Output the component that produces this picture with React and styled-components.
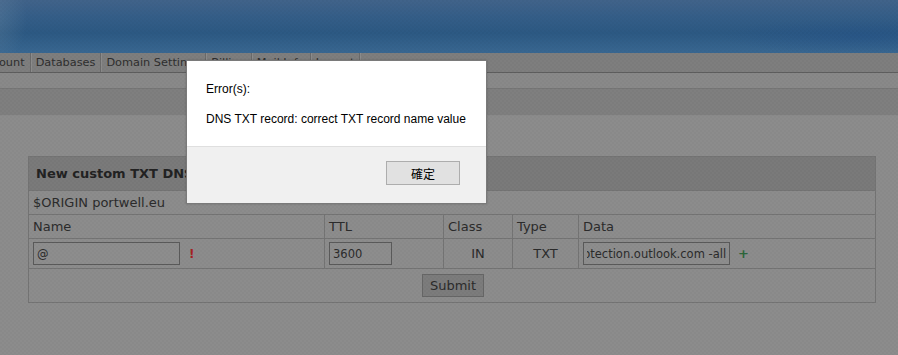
import React, { useEffect, useRef } from 'react';
import styled, { createGlobalStyle } from 'styled-components';

const GlobalStyle = createGlobalStyle`
    html, body{
        margin: 0;
        padding: 0;
        background: #8c8c8c;
        overflow: hidden;
    }
    body{
        font-family: "DejaVu Sans", Verdana, sans-serif;
    }
`;

const tabs = ["Account", "Databases", "Domain Settings", "Billing", "Mail Info", "Logout"];
const columns = [296, 119, 69, 66, 297];

export default function App(){
    const dataRef = useRef(null);

    useEffect(() => {
        if (dataRef.current) dataRef.current.scrollLeft = dataRef.current.scrollWidth;
    }, []);

    return (
        <Page>
            <GlobalStyle />
            <Header />
            <NavBar>
                <TabList>
                    {tabs.map(t => <Tab key={t}>{t}</Tab>)}
                </TabList>
            </NavBar>
            <SubBar />
            <ToolBar />
            <Content>
                <RecordTable>
                    <colgroup>
                        {columns.map((w, i) => <Col key={i} $w={w} />)}
                    </colgroup>
                    <tbody>
                        <tr>
                            <TitleCell colSpan={5}>New custom TXT DNS record</TitleCell>
                        </tr>
                        <tr>
                            <Cell colSpan={5}>$ORIGIN portwell.eu</Cell>
                        </tr>
                        <tr>
                            <Cell>Name</Cell>
                            <Cell>TTL</Cell>
                            <Cell>Class</Cell>
                            <Cell>Type</Cell>
                            <Cell>Data</Cell>
                        </tr>
                        <InputRow>
                            <Cell>
                                <Field $w={147} defaultValue="@" />
                                <Warn>!</Warn>
                            </Cell>
                            <Cell>
                                <Field $w={63} defaultValue="3600" />
                            </Cell>
                            <Cell $center>IN</Cell>
                            <Cell $center>TXT</Cell>
                            <Cell>
                                <Field
                                    ref={dataRef}
                                    $w={147}
                                    defaultValue="v=spf1 include:spf.protection.outlook.com -all"
                                />
                                <Plus>+</Plus>
                            </Cell>
                        </InputRow>
                        <tr>
                            <ButtonCell colSpan={5}>
                                <SubmitButton>Submit</SubmitButton>
                            </ButtonCell>
                        </tr>
                    </tbody>
                </RecordTable>
            </Content>
            <Backdrop />
            <Dialog>
                <DialogBody>
                    <p>Error(s):</p>
                    <p>DNS TXT record: correct TXT record name value</p>
                </DialogBody>
                <DialogFooter>
                    <OkButton>確定</OkButton>
                </DialogFooter>
            </Dialog>
        </Page>
    );
}

const Page = styled.div`
    position: relative;
    width: 898px;
    height: 355px;
    overflow: hidden;
    background: #8c8c8c;
`;

const Header = styled.div`
    height: 53px;
    background:
        radial-gradient(ellipse 50px 70px at -8px 18px, rgba(110,140,165,0.4), rgba(110,140,165,0) 70%),
        radial-gradient(ellipse 200px 26px at 860px 36px, rgba(35,80,135,0.45), rgba(35,80,135,0) 70%),
        linear-gradient(180deg, #41638a 0%, #355e88 30%, #2c5983 62%, #396791 100%);
`;

const NavBar = styled.div`
    height: 19px;
    background: #7e7e7e;
    border-bottom: 1px solid #5e5e5e;
`;

const TabList = styled.div`
    display: flex;
    height: 100%;
    margin-left: -26px;
`;

const Tab = styled.div`
    padding: 0 5px;
    font-size: 11.3px;
    line-height: 19px;
    color: #2e2e2e;
    white-space: nowrap;
    border-right: 1px solid #6a6a6a;
    box-shadow: 1px 0 0 #8c8c8c;
`;

const SubBar = styled.div`
    height: 15px;
    background: #898989;
    border-bottom: 1px solid #767676;
`;

const ToolBar = styled.div`
    height: 26px;
    background: #7f7f7f;
    border-bottom: 1px solid #8a8a8a;
`;

const Content = styled.div`
    padding: 40px 23px 0 28px;
`;

const RecordTable = styled.table`
    width: 847px;
    table-layout: fixed;
    border-collapse: collapse;
    border: 1px solid #747474;
    font-size: 13px;
    color: #2b2b2b;
`;

const Col = styled.col`
    width: ${p => p.$w}px;
`;

const TitleCell = styled.td`
    height: 33px;
    padding: 0 7px;
    background: #7a7a7a;
    font-weight: bold;
    color: #222;
    border-bottom: 1px solid #747474;
`;

const Cell = styled.td`
    height: 23px;
    padding: 0 4px;
    border: 1px solid #747474;
    text-align: ${p => (p.$center ? 'center' : 'left')};
    white-space: nowrap;
    overflow: hidden;
`;

const InputRow = styled.tr`
    td{
        height: 29px;
    }
`;

const Field = styled.input`
    width: ${p => p.$w}px;
    height: 23px;
    box-sizing: border-box;
    padding: 0 3px;
    border: 1px solid #5a5a5a;
    background: #8d8d8d;
    font-family: "DejaVu Sans", Verdana, sans-serif;
    font-size: 11.5px;
    color: #2b2b2b;
    vertical-align: middle;
    outline: none;
`;

const Warn = styled.span`
    display: inline-block;
    margin-left: 9px;
    color: #a52222;
    font-weight: bold;
    font-size: 12px;
    vertical-align: middle;
`;

const Plus = styled.span`
    display: inline-block;
    margin-left: 8px;
    color: #2c663a;
    font-weight: bold;
    font-size: 13px;
    vertical-align: middle;
`;

const ButtonCell = styled.td`
    height: 31px;
    text-align: center;
    border: 1px solid #747474;
`;

const SubmitButton = styled.button`
    width: 62px;
    height: 23px;
    margin-left: 2px;
    background: #7c7c7c;
    border: 1px solid #666;
    font-family: "DejaVu Sans", Verdana, sans-serif;
    font-size: 13px;
    color: #2b2b2b;
    padding: 0;
`;

const Backdrop = styled.div`
    position: absolute;
    inset: 0;
    background-image:
        linear-gradient(45deg, rgba(0,0,0,0.025) 25%, transparent 25%, transparent 75%, rgba(0,0,0,0.025) 75%),
        linear-gradient(45deg, rgba(0,0,0,0.025) 25%, transparent 25%, transparent 75%, rgba(0,0,0,0.025) 75%);
    background-size: 4px 4px;
    background-position: 0 0, 2px 2px;
    pointer-events: none;
`;

const Dialog = styled.div`
    position: absolute;
    left: 186px;
    top: 60px;
    width: 299px;
    border: 1px solid #7a7a7a;
    background: #fff;
    font-family: "Liberation Sans", Arial, sans-serif;
    box-shadow: 0 0 2px rgba(0,0,0,0.2);
`;

const DialogBody = styled.div`
    height: 85px;
    padding: 0 19px;
    border-bottom: 1px solid #dfdfdf;
    font-size: 12px;
    color: #000;
    p{
        margin: 0;
        line-height: 14px;
    }
    p:first-child{
        padding-top: 21px;
    }
    p + p{
        margin-top: 16px;
    }
`;

const DialogFooter = styled.div`
    height: 56px;
    background: #f0f0f0;
    display: flex;
    justify-content: flex-end;
    align-items: flex-start;
    padding: 14px 26px 0 0;
    box-sizing: border-box;
`;

const OkButton = styled.button`
    width: 74px;
    height: 24px;
    padding: 0;
    background: #e1e1e1;
    border: 1px solid #adadad;
    font-family: "Noto Sans CJK TC", sans-serif;
    font-size: 12px;
    color: #000;
`;
